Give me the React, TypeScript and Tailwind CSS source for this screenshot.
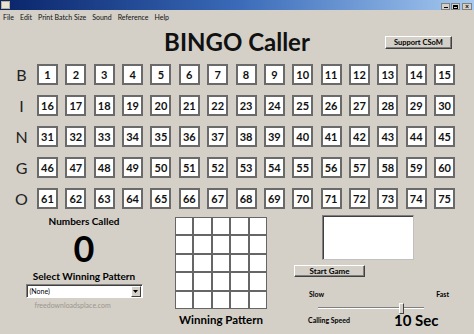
import React from "react";

const rows: [string, number][] = [
  ["B", 1],
  ["I", 16],
  ["N", 31],
  ["G", 46],
  ["O", 61],
];

function Cell({ n }: { n: number }) {
  return (
    <div className="w-[21px] h-[21px] bg-white border-2 border-[#6a6a6a] flex items-center justify-center text-[11px] font-bold leading-none text-[#111]">
      {n}
    </div>
  );
}

export default function App() {
  return (
    <div className="w-[474px] h-[334px] bg-[#d4d0c8] overflow-hidden font-['Lato',sans-serif] text-black flex flex-col">
      {/* title bar */}
      <div className="h-[10px] flex items-start bg-linear-to-r from-[#0a246a] via-[#3a6ab8] to-[#a6caf0]">
        <div className="w-[9px] h-[8px] mt-[1px] ml-[1px] bg-[#e8e4d0] border border-[#b8b090]" />
        <div className="flex-1" />
        <div className="flex gap-[1px] mt-[3px] mr-[2px]">
          <div className="w-[9px] h-[7px] bg-[#d4d0c8] border border-[#808080] flex items-end justify-center">
            <div className="w-[4px] h-[1px] bg-black mb-[1px]" />
          </div>
          <div className="w-[9px] h-[7px] bg-[#d4d0c8] border border-[#808080] flex items-center justify-center">
            <div className="w-[5px] h-[4px] border border-black border-t-2" />
          </div>
          <div className="w-[10px] h-[7px] ml-[1px] bg-[#d4d0c8] border border-[#808080] flex items-center justify-center text-[7px] leading-none font-bold">
            ×
          </div>
        </div>
      </div>

      {/* menu */}
      <div className="h-[15px] flex items-center pl-[3px] gap-[6px] text-[7px] text-[#111]">
        <span>File</span>
        <span>Edit</span>
        <span>Print Batch Size</span>
        <span>Sound</span>
        <span>Reference</span>
        <span>Help</span>
      </div>

      {/* header */}
      <div className="h-[39px] grid grid-cols-[1fr_auto_1fr] items-start">
        <div />
        <div className="text-[24px] font-bold leading-none mt-[5px] text-[#111]">BINGO Caller</div>
        <div className="flex">
          <div className="ml-[75px] mt-[11px] w-[67px] h-[13px] bg-[#d4d0c8] border border-t-white border-l-white border-r-[#404040] border-b-[#404040] shadow-[inset_-1px_-1px_0_#808080] flex items-center justify-center text-[7.5px] font-bold leading-none">
            Support CSoM
          </div>
        </div>
      </div>

      {/* number grid */}
      <div className="flex flex-col gap-[10px]">
        {rows.map(([letter, start]) => (
          <div key={letter} className="flex items-center h-[21px]">
            <div className="w-[37px] pl-[6px] flex justify-center text-[16px] leading-none text-[#222]">
              {letter}
            </div>
            <div className="flex gap-[7.36px]">
              {Array.from({ length: 15 }, (_, i) => (
                <Cell key={i} n={start + i} />
              ))}
            </div>
          </div>
        ))}
      </div>

      {/* bottom section */}
      <div className="flex flex-1">
        {/* left */}
        <div className="w-[168px] flex flex-col items-center pt-[6px]">
          <div className="text-[10px] font-bold leading-[12px]">Numbers Called</div>
          <div className="text-[36px] font-bold leading-[43px]">0</div>
          <div className="text-[10px] font-bold leading-[12px]">Select Winning Pattern</div>
          <div className="mt-[2px] w-[117px] h-[14px] bg-white border border-t-[#808080] border-l-[#808080] border-r-white border-b-white shadow-[inset_1px_1px_0_#404040] flex items-center">
            <span className="flex-1 pl-[3px] text-[7px] leading-none">(None)</span>
            <div className="w-[10px] h-[11px] mr-[1px] bg-[#d4d0c8] border border-t-white border-l-white border-r-[#404040] border-b-[#404040] flex items-center justify-center">
              <svg width="5" height="3" viewBox="0 0 5 3">
                <path d="M0 0 H5 L2.5 3 Z" fill="#000" />
              </svg>
            </div>
          </div>
          <div className="mt-[4px] w-[117px] pl-[9px] text-[7px] text-[#9a968c] leading-none">freedownloadsplace.com</div>
        </div>

        {/* pattern */}
        <div className="ml-[7px] w-[92px] flex flex-col items-center pt-[8px]">
          <div className="grid grid-cols-5">
            {Array.from({ length: 25 }, (_, i) => (
              <div key={i} className="w-[18.4px] h-[18.4px] bg-white border border-[#666]" />
            ))}
          </div>
          <div className="mt-[4px] text-[11.5px] font-bold leading-[14px] whitespace-nowrap">Winning Pattern</div>
        </div>

        {/* right */}
        <div className="ml-[27px] flex-1 flex flex-col pt-[6px]">
          <div className="ml-[28px] w-[92px] h-[45px] bg-white border border-t-[#808080] border-l-[#808080] border-r-[#c0c0c0] border-b-[#c0c0c0] shadow-[inset_1px_1px_0_#404040]" />
          <div className="mt-[5px] w-[71px] h-[12px] bg-[#d4d0c8] border border-t-white border-l-white border-r-[#404040] border-b-[#404040] shadow-[inset_-1px_-1px_0_#808080] flex items-center justify-center text-[8px] font-bold leading-none">
            Start Game
          </div>
          <div className="mt-[14px] flex justify-between w-[140px] ml-[15px] text-[7px] font-bold leading-none">
            <span>Slow</span>
            <span>Fast</span>
          </div>
          <div className="mt-[4px] ml-[24px] w-[106px] h-[12px] flex items-center">
            <div className="w-[81px] h-[2px] bg-[#808080] border-b border-white" />
            <div className="w-[5px] h-[11px] bg-[#d4d0c8] border border-t-white border-l-white border-r-[#404040] border-b-[#404040]" />
            <div className="flex-1 h-[2px] bg-[#808080] border-b border-white" />
          </div>
          <div className="flex items-end ml-[14px] mt-[-1px]">
            <span className="text-[7px] font-bold leading-none mb-[4px]">Calling Speed</span>
            <span className="ml-[44px] text-[15px] font-bold leading-none">10 Sec</span>
          </div>
        </div>
      </div>
    </div>
  );
}
